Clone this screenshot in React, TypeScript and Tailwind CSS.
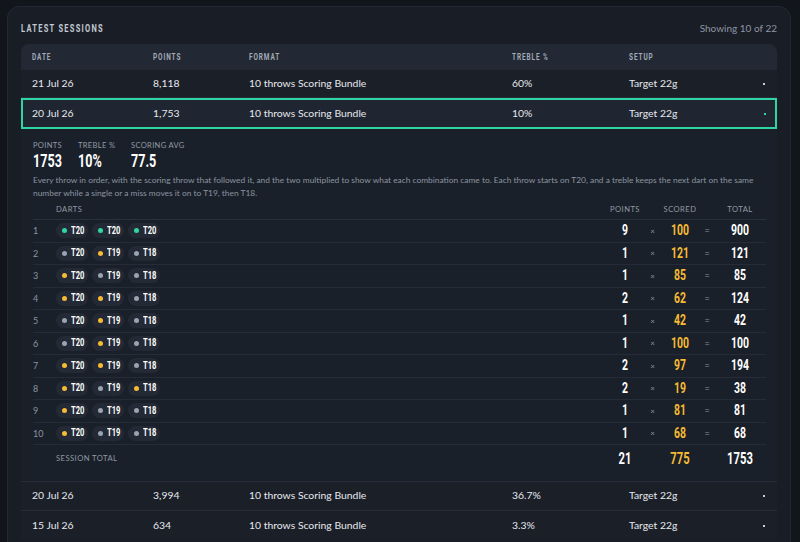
import React from "react";

// font stacks: body + a bold face that gets squeezed to look condensed
const sans = "font-['Lato','Noto_Sans',sans-serif]";
const num = "font-['Roboto',sans-serif] font-bold";

type Dot = "teal" | "gold" | "gray";

const dotColor: Record<Dot, string> = {
  teal: "bg-[#2fd6a3]",
  gold: "bg-[#f6bb33]",
  gray: "bg-[#9aa3b2]",
};

const throws: { darts: [Dot, string][]; points: number; scored: number; total: number }[] = [
  { darts: [["teal", "T20"], ["teal", "T20"], ["teal", "T20"]], points: 9, scored: 100, total: 900 },
  { darts: [["gray", "T20"], ["gold", "T19"], ["gray", "T18"]], points: 1, scored: 121, total: 121 },
  { darts: [["gold", "T20"], ["gray", "T19"], ["gray", "T18"]], points: 1, scored: 85, total: 85 },
  { darts: [["gold", "T20"], ["gold", "T19"], ["gray", "T18"]], points: 2, scored: 62, total: 124 },
  { darts: [["gray", "T20"], ["gold", "T19"], ["gray", "T18"]], points: 1, scored: 42, total: 42 },
  { darts: [["gray", "T20"], ["gold", "T19"], ["gray", "T18"]], points: 1, scored: 100, total: 100 },
  { darts: [["gold", "T20"], ["gold", "T19"], ["gray", "T18"]], points: 2, scored: 97, total: 194 },
  { darts: [["gold", "T20"], ["gray", "T19"], ["gold", "T18"]], points: 2, scored: 19, total: 38 },
  { darts: [["gold", "T20"], ["gray", "T19"], ["gray", "T18"]], points: 1, scored: 81, total: 81 },
  { darts: [["gold", "T20"], ["gray", "T19"], ["gray", "T18"]], points: 1, scored: 68, total: 68 },
];

const sessionCols = "grid grid-cols-[121px_96px_263px_117px_1fr_auto] items-center";
const throwCols = "grid grid-cols-[23px_1fr_40px_15px_40px_14px_52px] items-center";
const headCell = "origin-left scale-x-[0.76] whitespace-nowrap";

function SessionRow({ date, points, treble, last }: { date: string; points: string; treble: string; last?: boolean }) {
  return (
    <div className={`${sessionCols} px-[11px] h-[29px] text-[10.4px] text-[#e6e9ee] ${last ? "" : "border-b border-[#272d38]"}`}>
      <span>{date}</span>
      <span>{points}</span>
      <span>10 throws Scoring Bundle</span>
      <span>{treble}</span>
      <span>Target 22g</span>
      <span className="w-[2px] h-[2px] bg-[#c9ced6] mr-[1px]" />
    </div>
  );
}

function Chip({ dot, label }: { dot: Dot; label: string }) {
  return (
    <span className="flex items-center gap-[4px] h-[15px] pl-[6px] pr-[5px] rounded-full bg-[#232a35]">
      <span className={`w-[5px] h-[5px] rounded-full ${dotColor[dot]}`} />
      <span className={`${num} inline-block w-[12px] whitespace-nowrap origin-left scale-x-[0.72] text-[10.5px] text-white leading-none`}>{label}</span>
    </span>
  );
}

export default function App() {
  return (
    <div className={`${sans} w-[800px] h-[542px] overflow-hidden bg-[#12151b] pl-[7px] pt-[6px]`}>
      <div className="w-[784px] h-[560px] rounded-[12px] border border-[#232833] bg-[#191d25] px-[13px] pt-[12px]">
        <div className="flex items-center justify-between h-[18px] mb-[7px]">
          <span className={`${num} inline-block origin-left scale-x-[0.75] whitespace-nowrap text-[10px] tracking-[0.17em] text-[#c2c9d3]`}>LATEST SESSIONS</span>
          <span className="text-[10px] text-[#8d96a3]">Showing 10 of 22</span>
        </div>

        <div className="rounded-t-[8px] overflow-hidden bg-[#1b1f28]">
          <div className={`${sessionCols} ${num} px-[11px] h-[26px] bg-[#232934] text-[8.5px] tracking-[0.14em] text-[#a2abb8]`}>
            <span className={headCell}>DATE</span>
            <span className={headCell}>POINTS</span>
            <span className={headCell}>FORMAT</span>
            <span className={headCell}>TREBLE %</span>
            <span className={headCell}>SETUP</span>
            <span />
          </div>

          <div className={`${sessionCols} px-[11px] h-[28px] border-b border-[#272d38] text-[10.4px] text-[#e6e9ee]`}>
            <span>21 Jul 26</span>
            <span>8,118</span>
            <span>10 throws Scoring Bundle</span>
            <span>60%</span>
            <span>Target 22g</span>
            <span className="w-[2px] h-[2px] bg-[#c9ced6] mr-[1px]" />
          </div>

          <div className={`${sessionCols} border-2 border-[#2fd6a3] bg-[#1f2531] pl-[9px] pr-[9px] h-[31px] text-[10.4px] text-[#e6e9ee]`}>
            <span>20 Jul 26</span>
            <span>1,753</span>
            <span>10 throws Scoring Bundle</span>
            <span>10%</span>
            <span>Target 22g</span>
            <span className="w-[2px] h-[2px] bg-[#2fd6a3]" />
          </div>

          <div className="bg-[#1a2029] pl-[12px] pr-[11px] pt-[12px] pb-[8px] border-b border-[#272d38]">
            <div className="flex gap-[17px]">
              {[
                ["POINTS", "1753", "w-[28px]"],
                ["TREBLE %", "10%", "w-[36px]"],
                ["SCORING AVG", "77.5", "w-[54px]"],
              ].map(([l, v, w]) => (
                <div key={l} className={`flex flex-col ${w}`}>
                  <span className="text-[7.6px] tracking-[0.04em] text-[#9099a6] leading-[9px] whitespace-nowrap">{l}</span>
                  <span className={`${num} inline-block origin-left scale-x-[0.68] whitespace-nowrap text-[18.5px] text-white leading-[22px]`}>{v}</span>
                </div>
              ))}
            </div>
            <p className="mt-[2px] text-[8.4px] leading-[13px] text-[#8b94a1]">
              Every throw in order, with the scoring throw that followed it, and the two multiplied to show what each combination came to. Each throw starts on T20, and a treble keeps the next dart on the same number while a single or a miss moves it on to T19, then T18.
            </p>

            <div className="w-[733px]">
              <div className={`${throwCols} h-[20px] border-b border-[#29303b] text-[7.6px] tracking-[0.06em] text-[#9099a6]`}>
                <span />
                <span>DARTS</span>
                <span className="text-center">POINTS</span>
                <span />
                <span className="text-center">SCORED</span>
                <span />
                <span className="text-center">TOTAL</span>
              </div>
              {throws.map((t, i) => (
                <div key={i} className={`${throwCols} h-[22.5px] border-b border-[#262c37]`}>
                  <span className="text-[9px] text-[#8b94a1]">{i + 1}</span>
                  <div className="flex gap-[4px]">
                    {t.darts.map(([d, l], j) => (
                      <Chip key={j} dot={d} label={l} />
                    ))}
                  </div>
                  <span className={`${num} text-center scale-x-[0.72] text-[14.5px] text-white`}>{t.points}</span>
                  <span className="text-center text-[8px] text-[#8b94a1]">×</span>
                  <span className={`${num} text-center scale-x-[0.72] text-[14.5px] text-[#f6bb33]`}>{t.scored}</span>
                  <span className="text-center text-[9px] text-[#8b94a1]">=</span>
                  <span className={`${num} text-center scale-x-[0.72] text-[14.5px] text-white`}>{t.total}</span>
                </div>
              ))}
              <div className={`${throwCols} h-[28px]`}>
                <span />
                <span className="text-[7.6px] tracking-[0.06em] text-[#9099a6]">SESSION TOTAL</span>
                <span className={`${num} text-center scale-x-[0.68] text-[16.5px] text-white`}>21</span>
                <span />
                <span className={`${num} text-center scale-x-[0.68] text-[16.5px] text-[#f6bb33]`}>775</span>
                <span />
                <span className={`${num} text-center scale-x-[0.68] text-[16.5px] text-white`}>1753</span>
              </div>
            </div>
          </div>

          <SessionRow date="20 Jul 26" points="3,994" treble="36.7%" />
          <SessionRow date="15 Jul 26" points="634" treble="3.3%" last />
        </div>
      </div>
    </div>
  );
}
